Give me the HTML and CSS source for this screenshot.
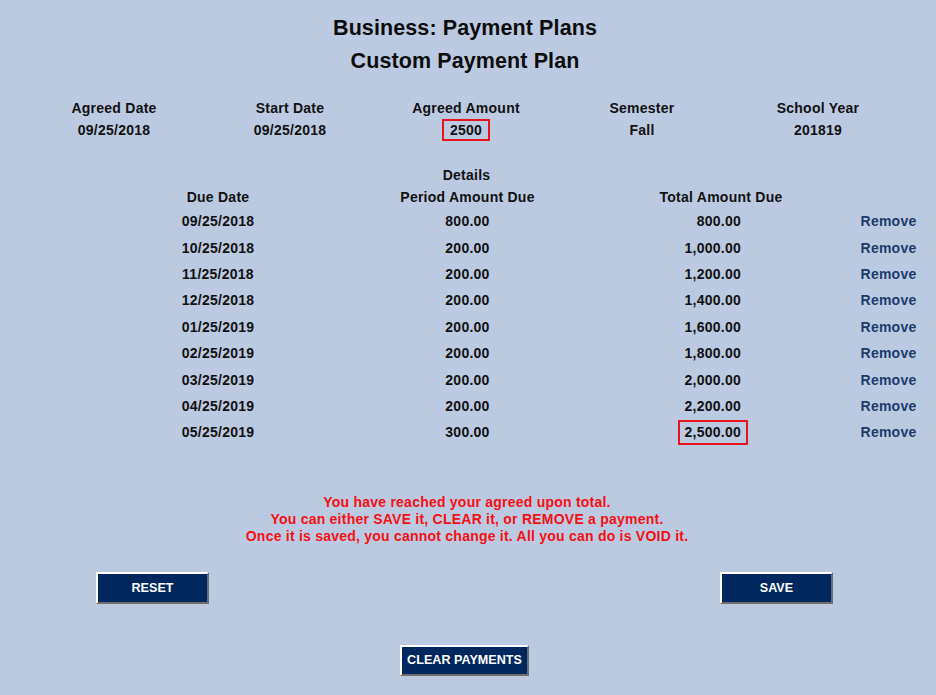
FILE: index.html
```html
<!DOCTYPE html>
<html>
<head>
<meta charset="utf-8">
<title>Business: Payment Plans</title>
<link rel="stylesheet" href="styles.css">
</head>
<body>
<div class="page">
  <h1 class="title">Business: Payment Plans</h1>
  <h2 class="title">Custom Payment Plan</h2>

  <div class="summary">
    <div class="scol"><div class="lbl">Agreed Date</div><div class="val">09/25/2018</div></div>
    <div class="scol"><div class="lbl">Start Date</div><div class="val">09/25/2018</div></div>
    <div class="scol"><div class="lbl">Agreed Amount</div><div class="val"><span class="boxed amt">2500</span></div></div>
    <div class="scol"><div class="lbl">Semester</div><div class="val">Fall</div></div>
    <div class="scol"><div class="lbl">School Year</div><div class="val">201819</div></div>
  </div>

  <div class="details-title">Details</div>
  <div class="details">
    <div class="hd c1">Due Date</div><div class="hd c2">Period Amount Due</div><div class="hd c3h">Total Amount Due</div><div class="hd"></div>

    <div class="c1">09/25/2018</div><div class="c2">800.00</div><div class="c3">800.00</div><div class="c4"><a class="remove">Remove</a></div>
    <div class="c1">10/25/2018</div><div class="c2">200.00</div><div class="c3">1,000.00</div><div class="c4"><a class="remove">Remove</a></div>
    <div class="c1">11/25/2018</div><div class="c2">200.00</div><div class="c3">1,200.00</div><div class="c4"><a class="remove">Remove</a></div>
    <div class="c1">12/25/2018</div><div class="c2">200.00</div><div class="c3">1,400.00</div><div class="c4"><a class="remove">Remove</a></div>
    <div class="c1">01/25/2019</div><div class="c2">200.00</div><div class="c3">1,600.00</div><div class="c4"><a class="remove">Remove</a></div>
    <div class="c1">02/25/2019</div><div class="c2">200.00</div><div class="c3">1,800.00</div><div class="c4"><a class="remove">Remove</a></div>
    <div class="c1">03/25/2019</div><div class="c2">200.00</div><div class="c3">2,000.00</div><div class="c4"><a class="remove">Remove</a></div>
    <div class="c1">04/25/2019</div><div class="c2">200.00</div><div class="c3">2,200.00</div><div class="c4"><a class="remove">Remove</a></div>
    <div class="c1">05/25/2019</div><div class="c2">300.00</div><div class="c3 last"><span class="boxed tot">2,500.00</span></div><div class="c4"><a class="remove">Remove</a></div>
  </div>

  <div class="message">
    You have reached your agreed upon total.<br>
    You can either SAVE it, CLEAR it, or REMOVE a payment.<br>
    Once it is saved, you cannot change it. All you can do is VOID it.
  </div>

  <div class="btn-row">
    <button class="btn wide">RESET</button>
    <button class="btn wide">SAVE</button>
  </div>
  <div class="btn-row center">
    <button class="btn clear">CLEAR PAYMENTS</button>
  </div>
</div>
</body>
</html>
```

FILE: styles.css
```css
html, body {
  margin: 0;
  padding: 0;
  background: #bccae1;
}
body {
  font-family: "Liberation Sans", Arial, sans-serif;
  font-weight: bold;
  font-size: 14px;
  letter-spacing: 0.25px;
  color: #111;
}
.page {
  width: 936px;
  height: 695px;
  overflow: hidden;
}
.title {
  margin: 0;
  text-align: center;
  font-size: 21.5px;
  line-height: 33px;
  letter-spacing: 0.1px;
  color: #0c0c0c;
  padding-right: 6px;
}
h1.title { padding-top: 12px; }

.summary {
  margin: 19px 0 0 26px;
  width: 880px;
  display: grid;
  grid-template-columns: repeat(5, 1fr);
  text-align: center;
}
.lbl, .val {
  line-height: 22px;
  height: 22px;
}
.boxed {
  display: inline-block;
  border: 2px solid #e8141b;
  vertical-align: top;
}
.amt {
  line-height: 18px;
  padding: 0 6px;
}

.details-title {
  margin-top: 23px;
  text-align: center;
  line-height: 22px;
  padding-right: 3px;
}
.details {
  margin-left: 92px;
  display: grid;
  grid-template-columns: 252px 250px 254px 81px;
  grid-template-rows: 22px;
  grid-auto-rows: 26.4px;
}
.details .hd {
  line-height: 22px;
  text-align: center;
}
.details > div {
  display: flex;
  align-items: center;
}
.details .c1, .details .c2, .details .c3h, .details .hd { justify-content: center; }
.details .c2 { padding-right: 3px; }
.details .c3 { justify-content: flex-end; padding-right: 107px; }
.details .c3.last { padding-right: 100px; }
.details .c4 { justify-content: center; }
.tot {
  line-height: 21px;
  padding: 0 5px 0 5px;
}
.remove {
  color: #1d3a6c;
  text-decoration: none;
  cursor: pointer;
}

.message {
  margin-top: 48px;
  text-align: center;
  color: #f50f14;
  line-height: 17px;
  font-size: 14px;
  letter-spacing: 0.23px;
  padding-right: 2px;
}

.btn-row {
  display: flex;
  justify-content: space-between;
  padding: 0 103px 0 96px;
  margin-top: 27px;
}
.btn-row.center {
  justify-content: center;
  padding: 0 7px 0 0;
  margin-top: 41px;
}
.btn {
  font-family: "Liberation Sans", Arial, sans-serif;
  font-weight: bold;
  font-size: 12.6px;
  letter-spacing: 0;
  color: #fff;
  background: #00285e;
  border-style: solid;
  border-width: 2px;
  border-color: #ffffff #6d6d6d #6d6d6d #ffffff;
  padding: 0;
  margin: 0;
  cursor: pointer;
}
.btn.wide {
  width: 113px;
  height: 32px;
}
.btn.clear {
  width: 129px;
  height: 31px;
}
```
